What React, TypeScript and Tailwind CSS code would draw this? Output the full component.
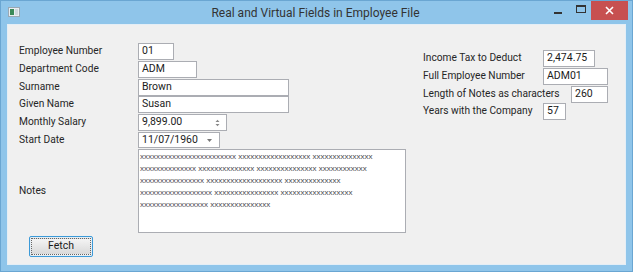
import React from "react";

const Box = ({ w, h = 17, children, className = "" }: { w: number; h?: number; children?: React.ReactNode; className?: string }) => (
  <div
    className={`relative flex items-center bg-white border border-[#abadb3] pl-[3px] text-[10.5px] text-[#1b1b1b] leading-none ${className}`}
    style={{ width: w, height: h }}
  >
    {children}
  </div>
);

const Label = ({ children, w }: { children: React.ReactNode; w?: number }) => (
  <div className="shrink-0 text-[10.2px] text-[#262626] leading-none whitespace-nowrap" style={w ? { width: w } : undefined}>
    {children}
  </div>
);

const notes = [
  "xxxxxxxxxxxxxxxxxxxxxxxx xxxxxxxxxxxxxxxxxx xxxxxxxxxxxxxxx",
  "xxxxxxxxxxxxxx xxxxxxxxxxxxxx xxxxxxxxxxxxxxx xxxxxxxxxxxx",
  "xxxxxxxxxxxxxxxx xxxxxxxxxxxxxxxxxxx xxxxxxxxxxxxxx",
  "xxxxxxxxxxxxxxxxxx xxxxxxxxxxxxxxxx xxxxxxxxxxxxxxxxxx",
  "xxxxxxxxxxxxxxxxx xxxxxxxxxxxxxxx",
];

export default function App() {
  return (
    <div className="w-[633px] h-[272px] bg-[#8fc5ea] border border-[#6aa6d2] flex flex-col font-['Roboto',sans-serif] overflow-hidden">
      {/* Title bar */}
      <div className="h-[23px] shrink-0 flex items-start relative">
        <div className="ml-[7px] mt-[6px] w-[12px] h-[10px] bg-[#e8eef2] border border-[#9aa8b4] flex items-center justify-start pl-[1px] gap-[1px]">
          <div className="w-[4px] h-[6px] bg-[#3a8a5a]" />
          <div className="w-[3px] h-[6px] bg-[#cfd8de]" />
        </div>
        <div className="flex-1 text-center mt-[5px] text-[12px] text-[#333] leading-[14px] pl-[66px]">
          Real and Virtual Fields in Employee File
        </div>
        <div className="flex items-start h-full">
          <div className="w-[26px] h-[20px] flex items-center justify-center">
            <div className="w-[8px] h-[2px] bg-[#333] mt-[4px]" />
          </div>
          <div className="w-[20px] h-[20px] flex items-center justify-center">
            <div className="w-[10px] h-[8px] border border-[#333] border-t-2 mb-[4px]" />
          </div>
          <div className="w-[37px] h-[19px] bg-[#c75050] flex items-center justify-center mr-[4px]">
            <svg width="9" height="9" viewBox="0 0 9 9">
              <path d="M1 1 L8 8 M8 1 L1 8" stroke="#fff" strokeWidth="1.6" />
            </svg>
          </div>
        </div>
      </div>

      {/* Client area */}
      <div className="mx-[6px] mb-[6px] flex-1 bg-[#f0f0f0] border border-[#e4eef6] flex pl-[11px] pt-[18px]">
        {/* Left column */}
        <div className="w-[393px] shrink-0 flex flex-col">
          <div className="h-[18px] flex items-start">
            <div className="h-[17px] flex items-center"><Label w={119}>Employee Number</Label></div>
            <Box w={36}>01</Box>
          </div>
          <div className="h-[18px] flex items-start">
            <div className="h-[17px] flex items-center"><Label w={119}>Department Code</Label></div>
            <Box w={59}>ADM</Box>
          </div>
          <div className="h-[17px] flex items-start">
            <div className="h-[17px] flex items-center"><Label w={119}>Surname</Label></div>
            <Box w={151}>Brown</Box>
          </div>
          <div className="h-[18px] flex items-start">
            <div className="h-[17px] flex items-center"><Label w={119}>Given Name</Label></div>
            <Box w={151}>Susan</Box>
          </div>
          <div className="h-[18px] flex items-start">
            <div className="h-[17px] flex items-center"><Label w={119}>Monthly Salary</Label></div>
            <Box w={89}>
              9,899.00
              <svg className="absolute right-[6px] top-[4px]" width="5" height="8" viewBox="0 0 5 8">
                <path d="M0.5 3 L2.5 0.8 L4.5 3 Z M0.5 5 L2.5 7.2 L4.5 5 Z" fill="#888" />
              </svg>
            </Box>
          </div>
          <div className="h-[17px] flex items-start">
            <div className="h-[17px] flex items-center"><Label w={119}>Start Date</Label></div>
            <Box w={82} h={16}>
              11/07/1960
              <svg className="absolute right-[7px] top-[6px]" width="5" height="3" viewBox="0 0 5 3">
                <path d="M0 0 L5 0 L2.5 3 Z" fill="#777" />
              </svg>
            </Box>
          </div>
          <div className="flex items-center">
            <Label w={119}>Notes</Label>
            <div className="w-[268px] h-[84px] bg-white border border-[#abadb3] pl-[1px] pt-[1px] font-['Liberation_Sans',sans-serif] text-[8px] leading-[12px] text-[#4a4a50]">
              {notes.map((l, i) => (
                <div key={i} className="whitespace-pre">{l}</div>
              ))}
            </div>
          </div>
          <div className="mt-[3px] ml-[10px]">
            <div className="w-[64px] h-[21px] border border-[#3c9ad8] rounded-[2px] p-[1px] bg-[#e6eef4]">
              <div className="w-full h-full border border-dotted border-[#666] bg-gradient-to-b from-[#f4f4f4] to-[#d9d9d9] flex items-center justify-center text-[10.5px] text-[#1b1b1b] leading-none">
                Fetch
              </div>
            </div>
          </div>
        </div>

        {/* Right column */}
        <div className="ml-[11px] mt-[7px] flex flex-col">
          <div className="h-[18px] flex items-start">
            <div className="h-[17px] flex items-center"><Label w={120}>Income Tax to Deduct</Label></div>
            <Box w={52}>2,474.75</Box>
          </div>
          <div className="h-[18px] flex items-start">
            <div className="h-[17px] flex items-center"><Label w={120}>Full Employee Number</Label></div>
            <Box w={65}>ADM01</Box>
          </div>
          <div className="h-[17px] flex items-start">
            <div className="h-[17px] flex items-center"><Label w={148}>Length of Notes as characters</Label></div>
            <Box w={37}>260</Box>
          </div>
          <div className="h-[18px] flex items-start">
            <div className="h-[17px] flex items-center"><Label w={120}>Years with the Company</Label></div>
            <Box w={23}>57</Box>
          </div>
        </div>
      </div>
    </div>
  );
}
